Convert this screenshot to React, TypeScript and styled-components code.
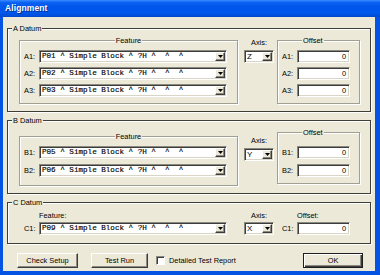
import React from 'react';
import styled, { createGlobalStyle } from 'styled-components';

const SANS = `"Liberation Sans", Arial, sans-serif`;
const MONO = `"Liberation Mono", "Courier New", monospace`;
const FACE = '#ECE9D8';

const Global = createGlobalStyle`
  html, body { margin: 0; padding: 0; background: ${FACE}; }
  body { font-family: ${SANS}; }
  * { box-sizing: border-box; }
`;

const Window = styled.div`
  width: 380px;
  height: 275px;
  display: flex;
  flex-direction: column;
  background: #0553e2;
  overflow: hidden;
`;

const TitleBar = styled.div`
  height: 17px;
  flex: none;
  display: flex;
  align-items: center;
  padding-left: 5px;
  background: linear-gradient(180deg, #3b8dff 0%, #0c62f2 14%, #0055ea 42%, #0058ee 72%, #0050dc 90%, #0047c6 100%);
`;

const Title = styled.span`
  font: bold 8.5px/1 ${SANS};
  color: #fff;
  text-shadow: 1px 1px 0 #0a2a8a;
  letter-spacing: 0.1px;
`;

const Client = styled.div`
  flex: 1;
  margin: 0 5px 4px 3px;
  background: ${FACE};
  display: flex;
  flex-direction: column;
  padding: 7px 0 3px;
`;

const Group = styled.fieldset<{ $tone: 'dark' | 'light' }>`
  margin: 0;
  padding: 0;
  min-inline-size: 0;
  border: 1px solid ${(p) => (p.$tone === 'dark' ? '#3e3e38' : '#a09f92')};
  box-shadow: inset 1px 1px 0 #fff, 1px 1px 0 #fff;
`;

const Caption = styled.legend<{ $center?: boolean; $indent?: number }>`
  padding: 0 1px;
  margin: ${(p) => (p.$center ? '0 auto' : `0 0 0 ${p.$indent ?? 0}px`)};
  font: 7.4px/9px ${SANS};
  color: #000;
  background: ${FACE};
`;

const DatumGroup = styled(Group)<{ $gapAbove: number }>`
  margin: ${(p) => p.$gapAbove}px 4px 0;
`;

const DatumBody = styled.div<{ $top: number; $bottom: number }>`
  display: flex;
  align-items: flex-start;
  padding: ${(p) => p.$top}px 9px ${(p) => p.$bottom}px 11px;
`;

const FeatureGroup = styled(Group)<{ $shift: number }>`
  width: 219px;
  flex: none;
  margin-top: ${(p) => p.$shift}px;
`;

const OffsetGroup = styled(Group)`
  width: 83px;
  flex: none;
  margin-left: 3px;
`;

const Rows = styled.div<{ $top: number; $gap: number; $bottom: number; $right: number }>`
  display: flex;
  flex-direction: column;
  gap: ${(p) => p.$gap}px;
  padding: ${(p) => p.$top}px ${(p) => p.$right}px ${(p) => p.$bottom}px 4px;
`;

const Row = styled.div`
  display: flex;
  align-items: center;
  height: 13px;
`;

const RowLabel = styled.span`
  width: 15px;
  flex: none;
  font: 7.4px/9px ${SANS};
  color: #000;
`;

const AxisColumn = styled.div<{ $top: number }>`
  width: 30px;
  flex: none;
  margin-left: 6px;
  padding-top: ${(p) => p.$top}px;
  display: flex;
  flex-direction: column;
  align-items: center;
  gap: 3px;
`;

const PlainColumn = styled.div<{ $width: number; $ml: number }>`
  width: ${(p) => p.$width}px;
  flex: none;
  margin-left: ${(p) => p.$ml}px;
  display: flex;
  flex-direction: column;
  gap: 2px;
`;

const ColumnCaption = styled.div<{ $indent?: number; $center?: boolean }>`
  font: 7.4px/9px ${SANS};
  color: #000;
  padding-left: ${(p) => p.$indent ?? 0}px;
  text-align: ${(p) => (p.$center ? 'center' : 'left')};
`;

const PlainRow = styled(Row)<{ $right: number }>`
  padding: 0 ${(p) => p.$right}px 0 5px;
`;

const Sunken = styled.div`
  height: 13px;
  border: 1px solid;
  border-color: #8a8a80 #fff #fff #8a8a80;
  box-shadow: inset 1px 1px 0 #3c3c3c, inset -1px -1px 0 #d8d5c6;
  padding: 1px;
  background: #fff;
  display: flex;
`;

const ComboBox = styled(Sunken)<{ $width?: number }>`
  width: ${(p) => (p.$width ? `${p.$width}px` : 'auto')};
  flex: ${(p) => (p.$width ? 'none' : '1')};
`;

const ComboText = styled.span<{ $mono?: boolean }>`
  flex: 1;
  overflow: hidden;
  white-space: pre;
  padding-left: 1px;
  font: ${(p) => (p.$mono ? `7.6px/9px ${MONO}` : `8px/9px ${SANS}`)};
  color: #000;
  -webkit-text-stroke: ${(p) => (p.$mono ? '0.15px #000' : '0')};
`;

const DropButton = styled.span`
  width: 10px;
  flex: none;
  background: ${FACE};
  border: 1px solid;
  border-color: #fff #3c3c3c #3c3c3c #fff;
  box-shadow: inset -1px -1px 0 #8a8a80;
  display: flex;
  align-items: center;
  justify-content: center;
`;

const NumberField = styled(Sunken)`
  width: 53px;
  flex: none;
  justify-content: flex-end;
  align-items: center;
  padding-right: 3px;
  font: 7.4px/9px ${SANS};
  color: #000;
`;

const ButtonBar = styled.div`
  margin-top: 9px;
  height: 15px;
  display: flex;
  align-items: center;
  padding: 0 12px 0 14px;
`;

const PushButton = styled.button<{ $width: number; $gap?: number; $push?: boolean; $default?: boolean }>`
  width: ${(p) => p.$width}px;
  height: 15px;
  padding: 0;
  margin-left: ${(p) => (p.$push ? 'auto' : `${p.$gap ?? 0}px`)};
  font: 7.4px/1 ${SANS};
  color: #000;
  background: ${FACE};
  border: 1px solid;
  border-color: ${(p) => (p.$default ? '#1e1e1e' : '#fff #3c3c3c #3c3c3c #fff')};
  box-shadow: ${(p) =>
    p.$default
      ? 'inset 1px 1px 0 #fff, inset -1px -1px 0 #3c3c3c, inset -2px -2px 0 #8a8a80'
      : 'inset -1px -1px 0 #8a8a80'};
`;

const CheckLabel = styled.label`
  display: flex;
  align-items: center;
  gap: 4px;
  margin-left: 8px;
  font: 7.4px/9px ${SANS};
  color: #000;
`;

const CheckBox = styled.span`
  width: 9px;
  height: 9px;
  background: #fff;
  border: 1px solid;
  border-color: #8a8a80 #fff #fff #8a8a80;
  box-shadow: inset 1px 1px 0 #3c3c3c;
`;

const Arrow = () => (
  <svg width="5" height="3" viewBox="0 0 5 3">
    <polygon points="0,0 5,0 2.5,3" fill="#000" />
  </svg>
);

const Combo = ({ value, width, mono }: { value: string; width?: number; mono?: boolean }) => (
  <ComboBox $width={width}>
    <ComboText $mono={mono}>{value}</ComboText>
    <DropButton>
      <Arrow />
    </DropButton>
  </ComboBox>
);

const feat = (n: string) => `P${n} ^ Simple Block ^ ?H ^  ^  ^`;

type Datum = {
  name: string;
  letter: string;
  axis: string;
  features: string[];
  pad: number;
  gap: number;
  featShift: number;
  featBottom: number;
  axisTop: number;
  offsetTop: number;
};

const datums: Datum[] = [
  { name: 'A Datum', letter: 'A', axis: 'Z', features: ['01', '02', '03'], pad: 3, gap: 4, featShift: 0, featBottom: 6, axisTop: 2, offsetTop: 5 },
  { name: 'B Datum', letter: 'B', axis: 'Y', features: ['05', '06'], pad: 3, gap: 5, featShift: 4, featBottom: 8, axisTop: 8, offsetTop: 9 },
];

const DatumBlock = ({ d, first }: { d: Datum; first: boolean }) => (
  <DatumGroup $tone="dark" $gapAbove={first ? 0 : 4}>
    <Caption $indent={4}>{d.name}</Caption>
    <DatumBody $top={d.pad} $bottom={7}>
      <FeatureGroup $tone="light" $shift={d.featShift}>
        <Caption $center>Feature</Caption>
        <Rows $top={5} $gap={d.gap} $bottom={d.featBottom} $right={10}>
          {d.features.map((f, i) => (
            <Row key={f}>
              <RowLabel>{`${d.letter}${i + 1}:`}</RowLabel>
              <Combo value={feat(f)} mono />
            </Row>
          ))}
        </Rows>
      </FeatureGroup>
      <AxisColumn $top={d.axisTop}>
        <ColumnCaption $center>Axis:</ColumnCaption>
        <Combo value={d.axis} width={30} />
      </AxisColumn>
      <OffsetGroup $tone="light">
        <Caption $indent={24}>Offset</Caption>
        <Rows $top={d.offsetTop} $gap={d.gap} $bottom={6} $right={9}>
          {d.features.map((f, i) => (
            <Row key={f}>
              <RowLabel>{`${d.letter}${i + 1}:`}</RowLabel>
              <NumberField>0</NumberField>
            </Row>
          ))}
        </Rows>
      </OffsetGroup>
    </DatumBody>
  </DatumGroup>
);

export default function App() {
  return (
    <>
      <Global />
      <Window>
        <TitleBar>
          <Title>Alignment</Title>
        </TitleBar>
        <Client>
          {datums.map((d, i) => (
            <DatumBlock key={d.name} d={d} first={i === 0} />
          ))}
          <DatumGroup $tone="dark" $gapAbove={4}>
            <Caption $indent={4}>C Datum</Caption>
            <DatumBody $top={4} $bottom={8}>
              <PlainColumn $width={219} $ml={0}>
                <ColumnCaption $indent={20}>Feature:</ColumnCaption>
                <PlainRow $right={11}>
                  <RowLabel>C1:</RowLabel>
                  <Combo value={feat('09')} mono />
                </PlainRow>
              </PlainColumn>
              <PlainColumn $width={30} $ml={6}>
                <ColumnCaption $center>Axis:</ColumnCaption>
                <Combo value="X" width={30} />
              </PlainColumn>
              <PlainColumn $width={83} $ml={3}>
                <ColumnCaption $indent={20}>Offset:</ColumnCaption>
                <PlainRow $right={10}>
                  <RowLabel>C1:</RowLabel>
                  <NumberField>0</NumberField>
                </PlainRow>
              </PlainColumn>
            </DatumBody>
          </DatumGroup>
          <ButtonBar>
            <PushButton $width={61}>Check Setup</PushButton>
            <PushButton $width={57} $gap={13}>Test Run</PushButton>
            <CheckLabel>
              <CheckBox />
              Detailed Test Report
            </CheckLabel>
            <PushButton $width={60} $push $default>OK</PushButton>
          </ButtonBar>
        </Client>
      </Window>
    </>
  );
}
